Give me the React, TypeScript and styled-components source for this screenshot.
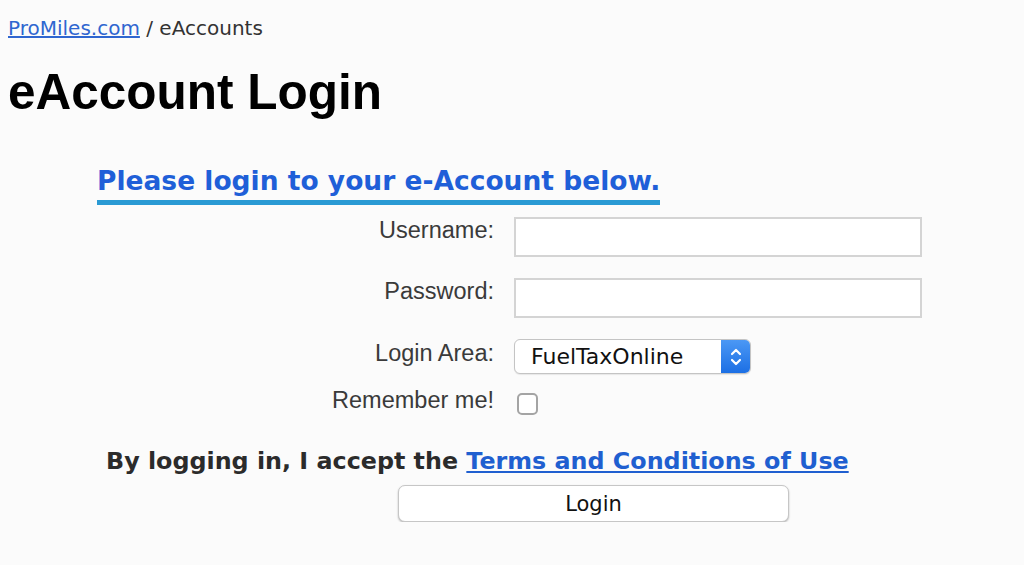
import React from 'react'
import styled, { createGlobalStyle } from 'styled-components'

const GlobalStyle = createGlobalStyle`
  html, body {
    background: #fbfbfb;
  }
  body {
    margin: 8px;
    font-family: 'DejaVu Sans', Verdana, sans-serif;
    color: #222;
  }
`

const Breadcrumb = styled.div`
  margin-top: 8px;
  font-size: 20px;
  line-height: 24px;
  color: #333;

  a {
    color: #2f66d0;
    text-decoration: underline;
  }
`

const Title = styled.h1`
  margin: 27px 0 0;
  font-family: 'Liberation Sans', Arial, sans-serif;
  font-weight: bold;
  font-size: 49.5px;
  line-height: 49px;
  color: #000;
`

const Panel = styled.div`
  margin-left: 89px;
  display: flex;
  flex-direction: column;
  align-items: flex-start;
`

const Intro = styled.h2`
  display: inline-block;
  margin: 50px 0 0;
  padding-bottom: 4px;
  border-bottom: 5px solid #2a9ad4;
  font-size: 26.5px;
  line-height: 30px;
  font-weight: bold;
  color: #1f5fd8;
`

const Fields = styled.div`
  margin-top: 12px;
  display: flex;
  flex-direction: column;
`

const Row = styled.div<{ $gap: number }>`
  display: flex;
  align-items: flex-start;
  gap: 20px;
  margin-top: ${(p) => p.$gap}px;
`

const Label = styled.label<{ $pad?: number }>`
  width: 397px;
  padding-top: ${(p) => p.$pad ?? 0}px;
  text-align: right;
  font-family: 'Liberation Sans', Arial, sans-serif;
  font-size: 23.5px;
  line-height: 24px;
  color: #3a3a3a;
`

const TextInput = styled.input`
  box-sizing: border-box;
  width: 408px;
  height: 40px;
  margin: 0;
  border: 2px solid #d4d4d4;
  background: #fff;
  outline: none;
`

const SelectBox = styled.div`
  box-sizing: border-box;
  display: flex;
  align-items: center;
  width: 237px;
  height: 35px;
  border: 1px solid #c4c4c4;
  border-radius: 6px;
  background: #fff;
  overflow: hidden;
  box-shadow: 0 1px 1px rgba(0, 0, 0, 0.08);
`

const SelectText = styled.span`
  flex: 1;
  padding-left: 16px;
  font-size: 22px;
  color: #111;
`

const Stepper = styled.span`
  display: flex;
  align-items: center;
  justify-content: center;
  width: 29px;
  height: 100%;
  background: linear-gradient(#4b98f5, #1c6fe4);
`

const Check = styled.span`
  box-sizing: border-box;
  display: block;
  width: 21px;
  height: 22px;
  margin: 5px 0 0 3px;
  border: 2px solid #a4a4a4;
  border-radius: 5px;
  background: #fff;
`

const Terms = styled.p`
  margin: 31px 0 0 9px;
  font-size: 23.8px;
  line-height: 30px;
  font-weight: bold;
  color: #2b2b2b;

  a {
    color: #1f5fd0;
    text-decoration: underline;
  }
`

const LoginButton = styled.button`
  margin: 9px 0 0 301px;
  width: 391px;
  height: 37px;
  border: 1px solid #c6c6c6;
  border-radius: 7px;
  background: #fff;
  box-shadow: 0 1px 2px rgba(0, 0, 0, 0.28);
  font-family: 'DejaVu Sans', Verdana, sans-serif;
  font-size: 21px;
  color: #111;
`

const Chevrons = () => (
  <svg width="14" height="22" viewBox="0 0 14 22" fill="none" stroke="#fff" strokeWidth="2.2" strokeLinecap="round" strokeLinejoin="round">
    <path d="M3 8 L7 4 L11 8" />
    <path d="M3 14 L7 18 L11 14" />
  </svg>
)

export default function App() {
  return (
    <>
      <GlobalStyle />
      <Breadcrumb>
        <a>ProMiles.com</a> / eAccounts
      </Breadcrumb>
      <Title>eAccount Login</Title>
      <Panel>
        <Intro>Please login to your e-Account below.</Intro>
        <Fields>
          <Row $gap={0}>
            <Label $pad={1}>Username:</Label>
            <TextInput type="text" />
          </Row>
          <Row $gap={21}>
            <Label $pad={1}>Password:</Label>
            <TextInput type="password" />
          </Row>
          <Row $gap={21}>
            <Label $pad={2}>Login Area:</Label>
            <SelectBox>
              <SelectText>FuelTaxOnline</SelectText>
              <Stepper>
                <Chevrons />
              </Stepper>
            </SelectBox>
          </Row>
          <Row $gap={14}>
            <Label>Remember me!</Label>
            <Check />
          </Row>
        </Fields>
        <Terms>
          By logging in, I accept the <a>Terms and Conditions of Use</a>
        </Terms>
        <LoginButton>Login</LoginButton>
      </Panel>
    </>
  )
}
